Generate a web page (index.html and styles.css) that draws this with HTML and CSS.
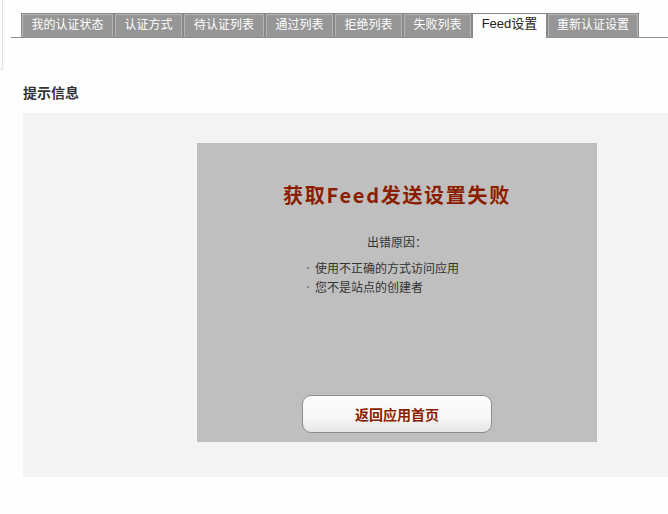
FILE: index.html
```html
<!DOCTYPE html>
<html lang="zh-CN">
<head>
<meta charset="utf-8">
<title>Feed设置</title>
<link rel="stylesheet" href="styles.css">
</head>
<body>
<div class="top">
  <div class="stub"></div>
  <div class="tabbar">
    <ul class="tabs">
      <li class="tab w93">我的认证状态</li>
      <li class="tab w69">认证方式</li>
      <li class="tab w82">待认证列表</li>
      <li class="tab w69">通过列表</li>
      <li class="tab w69">拒绝列表</li>
      <li class="tab w69">失败列表</li>
      <li class="tab active w75">Feed设置</li>
      <li class="tab w92">重新认证设置</li>
    </ul>
  </div>
</div>
<h2 class="heading">提示信息</h2>
<div class="panel">
  <div class="msgbox">
    <h1 class="title">获取Feed发送设置失败</h1>
    <p class="reason">出错原因：</p>
    <ul class="reasons">
      <li>使用不正确的方式访问应用</li>
      <li>您不是站点的创建者</li>
    </ul>
    <a class="btn">返回应用首页</a>
  </div>
</div>
</body>
</html>
```

FILE: styles.css
```css
html, body {
  margin: 0;
  padding: 0;
  background: #fefefe;
  overflow: hidden;
}
body {
  font-family: "Noto Sans CJK SC", "Liberation Sans", sans-serif;
  font-size: 12px;
  color: #333;
}
.top {
  display: flex;
  align-items: flex-start;
  height: 70px;
}
.stub {
  width: 2px;
  height: 69px;
  border-right: 1px solid #e2e2e2;
  border-bottom: 1px solid #e2e2e2;
  flex: none;
}
.tabbar {
  flex: 1;
  margin-left: 8px;
  margin-top: 13px;
  border-bottom: 1px solid #8f8f8f;
  padding-left: 10px;
}
.tabs {
  list-style: none;
  margin: 0;
  padding: 0;
  display: flex;
}
.tab {
  box-sizing: border-box;
  height: 24px;
  line-height: 20px;
  text-align: center;
  color: #fff;
  background: #969696;
  border: 1px solid #888;
  border-bottom: none;
  box-shadow: inset 1px 1px 0 #b4b4b4, inset -1px 0 0 #b4b4b4;
  font-size: 12px;
}
.tab.active {
  background: #fff;
  color: #222;
  box-shadow: none;
  height: 25px;
  margin-bottom: -1px;
  font-family: "Liberation Sans", "Noto Sans CJK SC", sans-serif;
  font-size: 13px;
}
.w93 { width: 93px; }
.w69 { width: 69px; }
.w82 { width: 82px; }
.w75 { width: 75px; }
.w92 { width: 92px; }
.heading {
  margin: 13px 0 0 23px;
  font-size: 14px;
  font-weight: bold;
  color: #333;
  line-height: 18px;
}
.panel {
  margin: 12px 0 0 23px;
  background: #f3f3f3;
  padding: 30px 0 35px 174px;
}
.msgbox {
  width: 400px;
  height: 299px;
  background: #bfbfbf;
  display: flex;
  flex-direction: column;
  align-items: center;
}
.title {
  margin: 39px 0 0;
  font-size: 20px;
  line-height: 26px;
  font-weight: bold;
  color: #8b1e00;
  letter-spacing: 1.7px;
}
.reason {
  margin: 26px 0 0;
  font-size: 12px;
  line-height: 16px;
  color: #333;
}
.reasons {
  list-style: none;
  margin: 8px 0 0;
  padding: 0 0 0 110px;
  align-self: stretch;
}
.reasons li {
  position: relative;
  padding-left: 8px;
  line-height: 19px;
  color: #333;
}
.reasons li::before {
  content: "";
  position: absolute;
  left: 0;
  top: 9px;
  width: 2px;
  height: 2px;
  background: #888;
}
.btn {
  margin-top: auto;
  margin-bottom: 9px;
  box-sizing: border-box;
  width: 190px;
  height: 38px;
  border: 1px solid #8e8e8e;
  border-radius: 9px;
  background: linear-gradient(#fdfdfd 0%, #f8f8f8 55%, #e6e6e6 100%);
  color: #8b1e00;
  font-size: 14px;
  font-weight: bold;
  line-height: 36px;
  text-align: center;
}
```
